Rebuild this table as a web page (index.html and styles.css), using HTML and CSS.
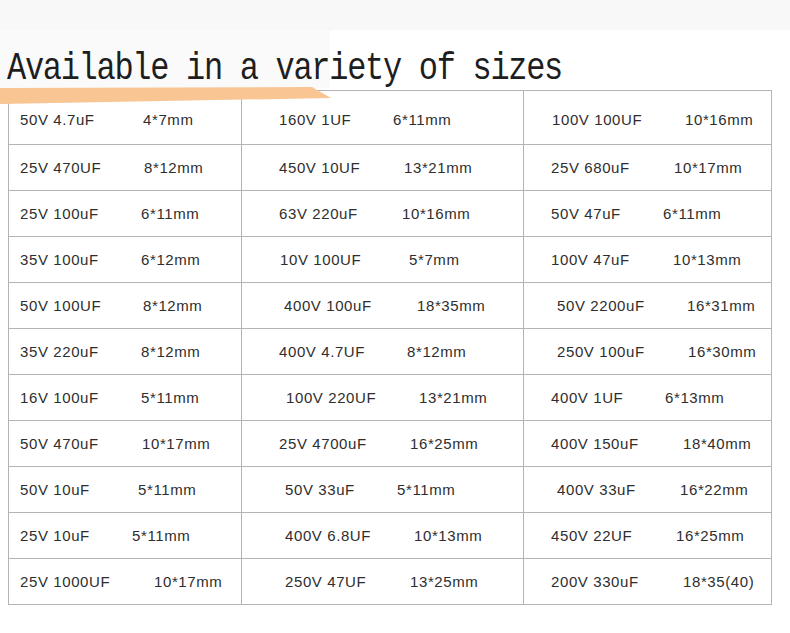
FILE: index.html
```html
<!DOCTYPE html>
<html>
<head>
<meta charset="utf-8">
<link rel="stylesheet" href="styles.css">
</head>
<body>
<div class="page">
  <div class="topband"></div>
  <div class="leftshade"></div>
  <h1 class="title"><span class="title-text">Available in a variety of sizes</span></h1>
  <svg class="stripe" width="340" height="110" viewBox="0 0 340 110"><polygon points="0,88 312,87 331,98 0,104" fill="#f8c593"/></svg>
  <div class="table">
    <div class="cell first c1" style="--p:11px;--w:123px"><span>50V 4.7uF</span><span>4*7mm</span></div>
    <div class="cell first c2" style="--p:37px;--w:114px"><span>160V 1UF</span><span>6*11mm</span></div>
    <div class="cell first c3" style="--p:28px;--w:133px"><span>100V 100UF</span><span>10*16mm</span></div>

    <div class="cell c1" style="--p:11px;--w:124px"><span>25V 470UF</span><span>8*12mm</span></div>
    <div class="cell c2" style="--p:37px;--w:125px"><span>450V 10UF</span><span>13*21mm</span></div>
    <div class="cell c3" style="--p:27px;--w:123px"><span>25V 680uF</span><span>10*17mm</span></div>

    <div class="cell c1" style="--p:11px;--w:121px"><span>25V 100uF</span><span>6*11mm</span></div>
    <div class="cell c2" style="--p:37px;--w:123px"><span>63V 220uF</span><span>10*16mm</span></div>
    <div class="cell c3" style="--p:27px;--w:112px"><span>50V 47uF</span><span>6*11mm</span></div>

    <div class="cell c1" style="--p:11px;--w:121px"><span>35V 100uF</span><span>6*12mm</span></div>
    <div class="cell c2" style="--p:38px;--w:129px"><span>10V 100UF</span><span>5*7mm</span></div>
    <div class="cell c3" style="--p:27px;--w:122px"><span>100V 47uF</span><span>10*13mm</span></div>

    <div class="cell c1" style="--p:11px;--w:123px"><span>50V 100UF</span><span>8*12mm</span></div>
    <div class="cell c2" style="--p:42px;--w:133px"><span>400V 100uF</span><span>18*35mm</span></div>
    <div class="cell c3" style="--p:33px;--w:130px"><span>50V 2200uF</span><span>16*31mm</span></div>

    <div class="cell c1" style="--p:11px;--w:121px"><span>35V 220uF</span><span>8*12mm</span></div>
    <div class="cell c2" style="--p:37px;--w:128px"><span>400V 4.7UF</span><span>8*12mm</span></div>
    <div class="cell c3" style="--p:33px;--w:131px"><span>250V 100uF</span><span>16*30mm</span></div>

    <div class="cell c1" style="--p:11px;--w:121px"><span>16V 100uF</span><span>5*11mm</span></div>
    <div class="cell c2" style="--p:44px;--w:133px"><span>100V 220UF</span><span>13*21mm</span></div>
    <div class="cell c3" style="--p:27px;--w:114px"><span>400V 1UF</span><span>6*13mm</span></div>

    <div class="cell c1" style="--p:11px;--w:122px"><span>50V 470uF</span><span>10*17mm</span></div>
    <div class="cell c2" style="--p:37px;--w:131px"><span>25V 4700uF</span><span>16*25mm</span></div>
    <div class="cell c3" style="--p:27px;--w:132px"><span>400V 150uF</span><span>18*40mm</span></div>

    <div class="cell c1" style="--p:11px;--w:118px"><span>50V 10uF</span><span>5*11mm</span></div>
    <div class="cell c2" style="--p:43px;--w:112px"><span>50V 33uF</span><span>5*11mm</span></div>
    <div class="cell c3" style="--p:33px;--w:123px"><span>400V 33uF</span><span>16*22mm</span></div>

    <div class="cell c1" style="--p:11px;--w:112px"><span>25V 10uF</span><span>5*11mm</span></div>
    <div class="cell c2" style="--p:43px;--w:129px"><span>400V 6.8UF</span><span>10*13mm</span></div>
    <div class="cell c3" style="--p:27px;--w:125px"><span>450V 22UF</span><span>16*25mm</span></div>

    <div class="cell c1" style="--p:11px;--w:134px"><span>25V 1000UF</span><span>10*17mm</span></div>
    <div class="cell c2" style="--p:43px;--w:125px"><span>250V 47UF</span><span>13*25mm</span></div>
    <div class="cell c3" style="--p:27px;--w:132px"><span>200V 330uF</span><span>18*35(40)</span></div>
  </div>
</div>
</body>
</html>
```
FILE: styles.css
```css
* { box-sizing: border-box; }
html, body { margin: 0; padding: 0; background: #ffffff; }
.page {
  position: relative;
  width: 790px;
  height: 633px;
  overflow: hidden;
}
.topband {
  height: 30px;
  background: #f8f8f8;
}
.leftshade {
  position: absolute;
  left: 0;
  top: 30px;
  width: 330px;
  height: 58px;
  background: #fafafa;
}
.title {
  position: relative;
  margin: 22px 0 0 7px;
  height: 38px;
  font-family: "Liberation Mono", monospace;
  font-weight: normal;
  font-size: 32px;
  line-height: 38px;
  letter-spacing: -1.3px;
  color: #1e1e1e;
  white-space: nowrap;
}
.title-text {
  display: inline-block;
  transform: scaleY(1.2);
  transform-origin: 0 28px;
}
.stripe {
  position: absolute;
  left: 0;
  top: 0;
  z-index: 2;
}
.table {
  margin-left: 8px;
  width: 764px;
  display: grid;
  grid-template-columns: 233px 282px 248px;
  grid-template-rows: 54px repeat(10, 46px);
  border-top: 1px solid #b3b3b3;
  border-left: 1px solid #b3b3b3;
}
.cell {
  display: flex;
  align-items: center;
  padding-left: var(--p);
  border-right: 1px solid #b3b3b3;
  border-bottom: 1px solid #b3b3b3;
  font-family: "Liberation Sans", Arial, sans-serif;
  font-size: 15px;
  letter-spacing: 0.6px;
  color: #2e2e2e;
  white-space: nowrap;
}
.cell.first {
  padding-top: 3px;
}
.cell span:first-child {
  width: var(--w);
  flex: none;
}
```
